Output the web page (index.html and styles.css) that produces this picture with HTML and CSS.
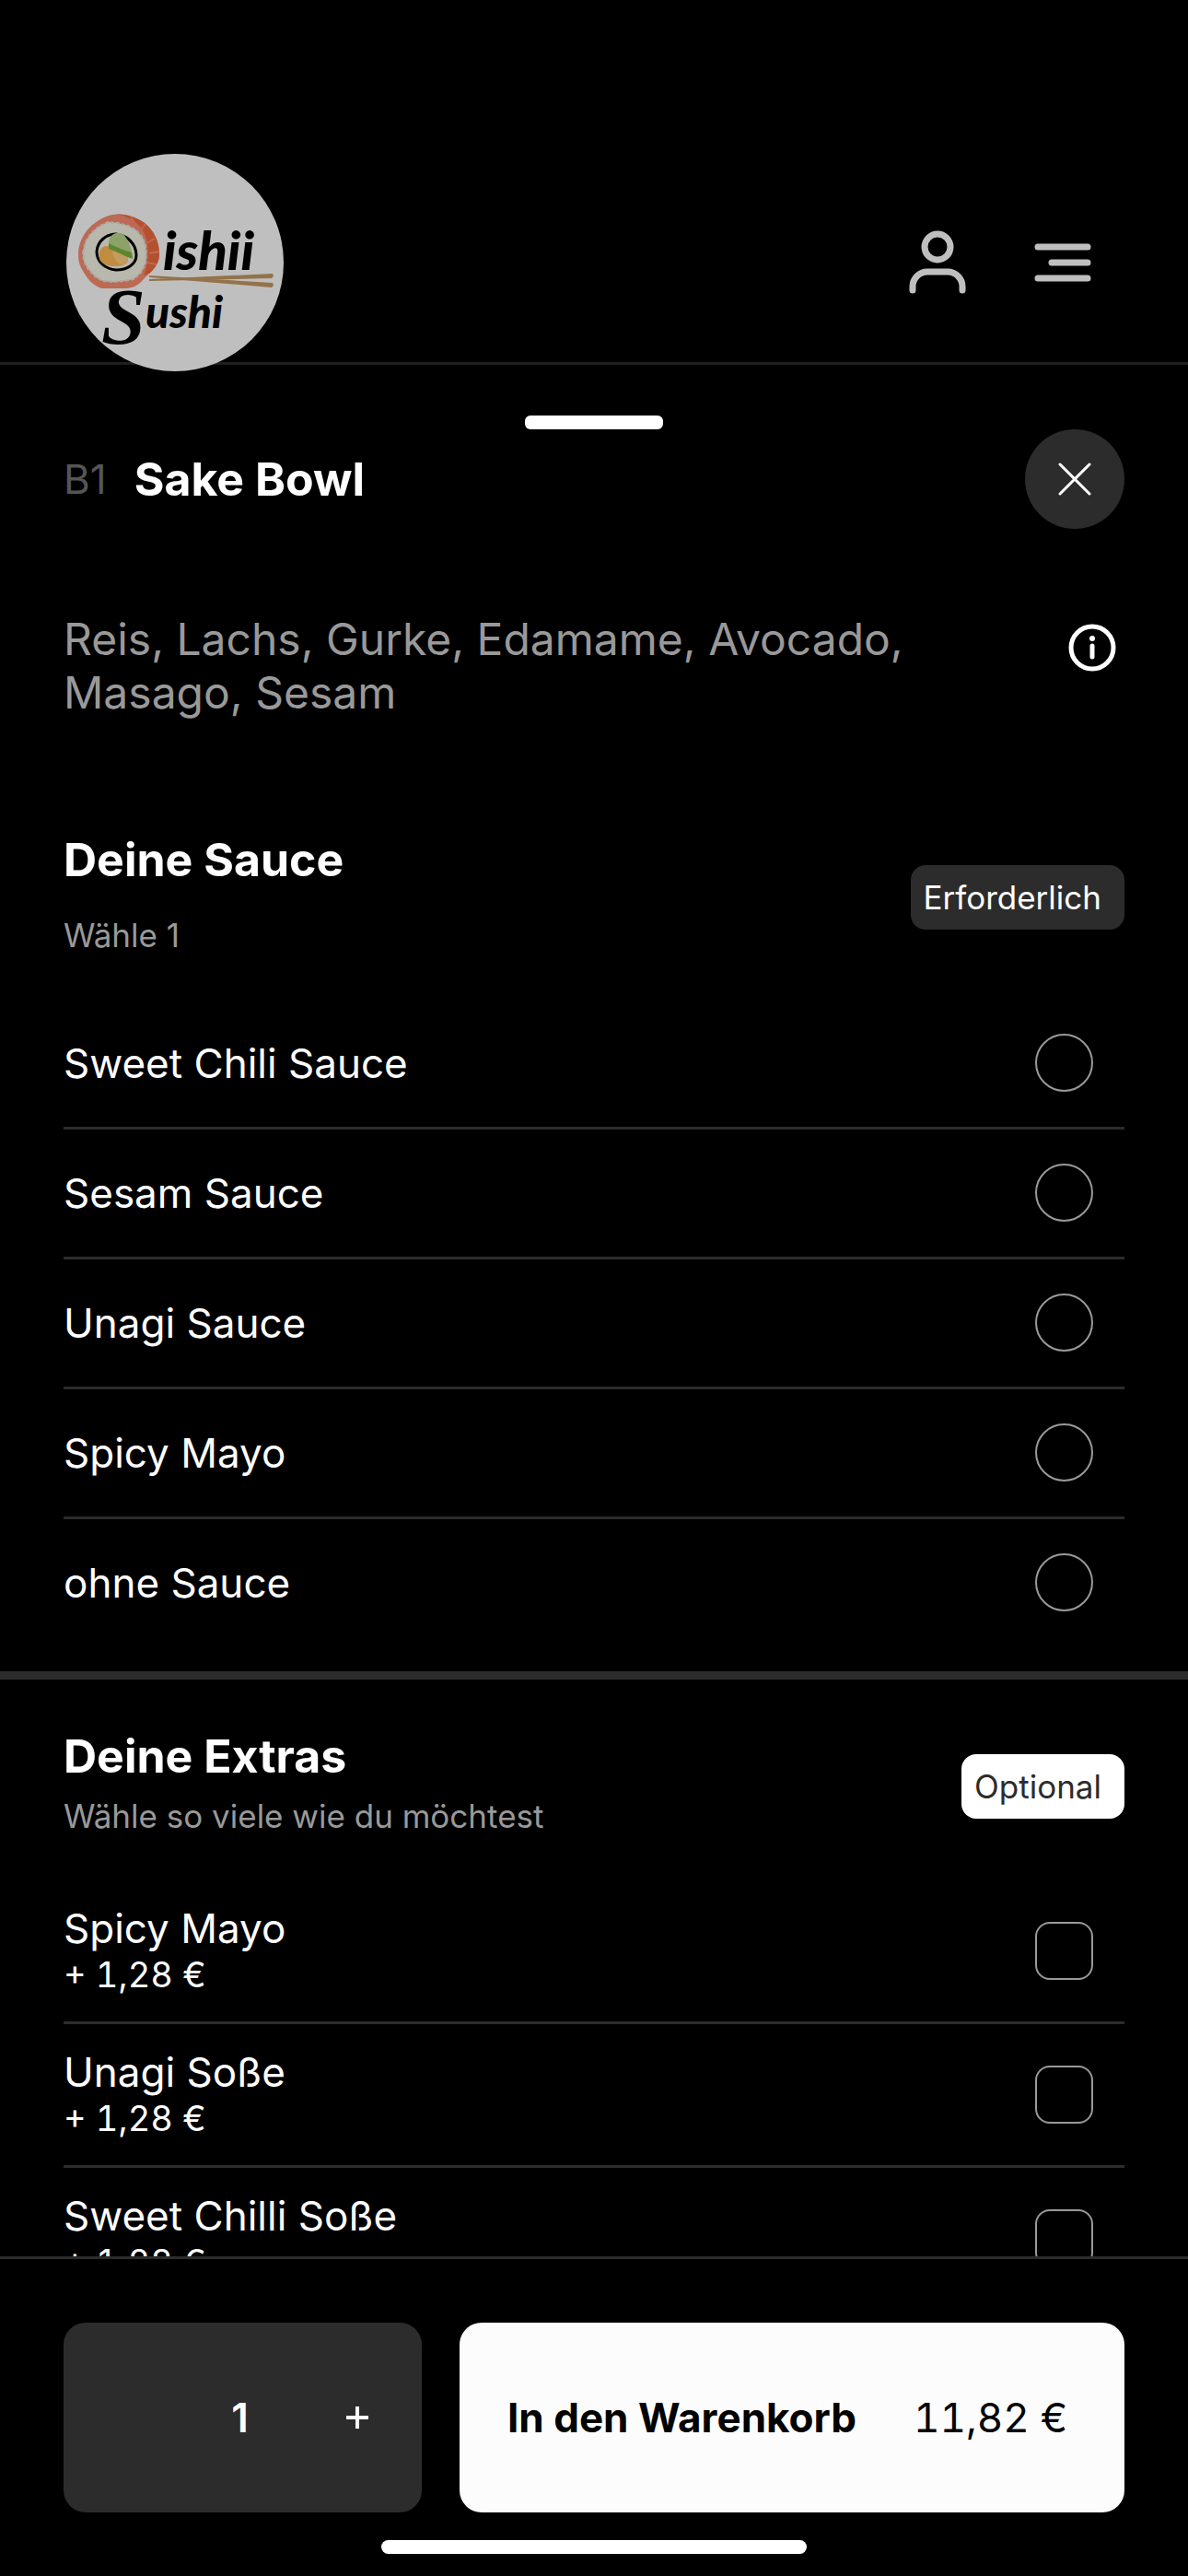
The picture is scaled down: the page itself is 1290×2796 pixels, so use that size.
FILE: index.html
```html
<!DOCTYPE html>
<html lang="de">
<head>
    <meta charset="UTF-8">
    <meta name="viewport" content="width=device-width, initial-scale=1.0">
    <title>Oishii Sushi - Sake Bowl</title>
    <link rel="stylesheet" href="styles.css">
</head>
<body>
    <header class="topbar">
        <a class="logo" href="#" aria-label="Oishii Sushi">
            <svg viewBox="0 0 236 236">
                <defs>
                    <clipPath id="rollClip">
                        <path d="M13 108C13 92 25 76 41 69C55 62 72 66 85 75C95 83 101 95 101 109C101 117 97 124 90 130C82 137 78 146 64 146H38C27 142 22 134 18 127C14 121 13 115 13 108Z"/>
                    </clipPath>
                </defs>
                <circle cx="118" cy="118" r="118" fill="#bfbfc0"/>
                <!-- salmon roll -->
                <g clip-path="url(#rollClip)">
                    <rect x="10" y="60" width="95" height="90" fill="#bd6a55"/>
                    <path d="M46 64C72 66 87 80 88 100C89 114 88 122 84 132L105 125V60Z" fill="#b5502f"/>
                    <path d="M56 66l8 6M70 68l5 9M86 76l-6 8M96 92l-9 5M101 106l-11 2M98 120l-10-2" stroke="#bd6a55" stroke-width="2"/>
                </g>
                <path d="M18 107L21 95L27 86L35 79L45 74L56 75L67 78L76 83L83 91L86 99L87 109L86 119L81 129L73 136L62 138L51 139L40 138L31 133L23 124L19 116Z" fill="#b9b8ad" stroke="#aaa9a5" stroke-width="2" stroke-dasharray="4 2"/>
                <path d="M33 106C34 94 44 87 54 87C66 88 76 98 76 110C76 120 66 126 54 126C42 125 33 117 33 106Z" fill="#b9b8ad" stroke="#000" stroke-width="3"/>
                <path d="M36 114C34 106 38 100 44 100C54 101 68 112 67 116C65 121 59 122 50 122C42 121 37 118 36 114Z" fill="#c08c40"/>
                <path d="M50 105L67 112C67 117 64 121 58 120C53 116 50 111 50 105Z" fill="#c39c62"/>
                <path d="M46 97C46 89 52 85 59 86C66 88 71 102 72 113C62 110 53 104 46 102Z" fill="#8ba369"/>
                <path d="M46 97C54 101 63 105 71 107L72 114C61 110 53 105 46 103Z" fill="#5d862e"/>
                <!-- chopsticks -->
                <path d="M90 136L90 138L223 135Q226 133 224 130Z" fill="#94724a"/>
                <path d="M90 132L90 134L223 145Q226 143 224 140Z" fill="#94724a"/>
                <text class="logo-text" x="105" y="126" font-size="58">ishii</text>
                <text class="logo-text logo-initial" x="38" y="206" font-size="86">S</text>
                <text class="logo-text" x="86" y="189" font-size="48">ushi</text>
            </svg>
        </a>
        <nav class="topbar-actions">
            <button class="icon-button" type="button" aria-label="Konto">
                <svg viewBox="0 0 72 72" fill="none" stroke="#bfbfbf" stroke-width="7" stroke-linecap="round">
                    <circle cx="36" cy="19" r="14"/>
                    <path d="M9 66V62A16 16 0 0 1 25 46H47A16 16 0 0 1 63 62V66"/>
                </svg>
            </button>
            <button class="icon-button" type="button" aria-label="Menü">
                <svg viewBox="0 0 72 72" fill="none" stroke="#bfbfbf" stroke-width="7" stroke-linecap="round">
                    <path d="M9 19H63M24 36H63M9 53H63"/>
                </svg>
            </button>
        </nav>
    </header>

    <main class="sheet">
        <div class="handle"></div>

        <div class="product">
            <span class="product-number">B1</span>
            <h1>Sake Bowl</h1>
            <button class="close" type="button" aria-label="Schließen">
                <svg viewBox="0 0 36 36" fill="none" stroke="#fff" stroke-width="3" stroke-linecap="round">
                    <path d="M2 2L34 34M34 2L2 34"/>
                </svg>
            </button>
        </div>

        <div class="description">
            <p>Reis, Lachs, Gurke, Edamame, Avocado, Masago, Sesam</p>
            <button class="info" type="button" aria-label="Informationen">
                <svg viewBox="0 0 52 52" fill="none" stroke="#fff" stroke-width="5" stroke-linecap="round">
                    <circle cx="26" cy="26" r="23"/>
                    <path d="M26 24V36"/>
                    <circle cx="26" cy="16" r="3" fill="#fff" stroke="none"/>
                </svg>
            </button>
        </div>

        <section class="group">
            <div class="group-header">
                <div class="group-titles spaced">
                    <h2>Deine Sauce</h2>
                    <p>Wähle 1</p>
                </div>
                <span class="tag">Erforderlich</span>
            </div>
            <div class="options">
                <label class="option"><span>Sweet Chili Sauce</span><input type="radio" name="sauce"></label>
                <label class="option"><span>Sesam Sauce</span><input type="radio" name="sauce"></label>
                <label class="option"><span>Unagi Sauce</span><input type="radio" name="sauce"></label>
                <label class="option"><span>Spicy Mayo</span><input type="radio" name="sauce"></label>
                <label class="option"><span>ohne Sauce</span><input type="radio" name="sauce"></label>
            </div>
        </section>

        <section class="group extras">
            <div class="group-header">
                <div class="group-titles">
                    <h2>Deine Extras</h2>
                    <p>Wähle so viele wie du möchtest</p>
                </div>
                <span class="tag tag-light">Optional</span>
            </div>
            <div class="options">
                <label class="option with-price">
                    <span>Spicy Mayo<small>+ 1,28 €</small></span>
                    <input type="checkbox" name="extra">
                </label>
                <label class="option with-price">
                    <span>Unagi Soße<small>+ 1,28 €</small></span>
                    <input type="checkbox" name="extra">
                </label>
                <label class="option with-price">
                    <span>Sweet Chilli Soße<small>+ 1,28 €</small></span>
                    <input type="checkbox" name="extra">
                </label>
            </div>
        </section>
    </main>

    <footer class="order-bar">
        <div class="quantity">
            <output>1</output>
            <button type="button" aria-label="Mehr">
                <svg viewBox="0 0 24 24" fill="none" stroke="#fff" stroke-width="4">
                    <path d="M12 0V24M0 12H24"/>
                </svg>
            </button>
        </div>
        <button class="add-to-cart" type="button">
            <strong>In den Warenkorb</strong>
            <span class="total">11,82 €</span>
        </button>
        <div class="home-indicator"></div>
    </footer>
</body>
</html>
```
FILE: styles.css
```css
* {
    box-sizing: border-box;
}
body {
    display: flex;
    flex-direction: column;
    height: 100vh;
    margin: 0;
    background-color: #000;
    color: #fff;
    font-family: Inter, "Liberation Sans", sans-serif;
    font-size: 44px;
}
h1, h2, p {
    margin: 0;
}
h1, h2 {
    font-size: 50px;
    font-weight: 700;
    line-height: 60px;
}
button {
    padding: 0;
    border: none;
    background: none;
    color: inherit;
    font: inherit;
    cursor: pointer;
}
svg {
    display: block;
    width: 100%;
}

/* Top bar */
.topbar {
    display: flex;
    flex-shrink: 0;
    justify-content: space-between;
    align-items: center;
    padding: 167px 100px 0 72px;
    border-bottom: 3px solid #202020;
}
.logo {
    width: 236px;
    margin-bottom: -10px;
    z-index: 1;
}
.logo-text {
    font-family: Lato, sans-serif;
    font-style: italic;
    font-weight: 900;
}
.logo-initial {
    font-family: "Liberation Serif", serif;
}
.topbar-actions {
    display: flex;
    gap: 64px;
    margin-top: 10px;
}
.icon-button {
    width: 72px;
}

/* Bottom sheet */
.sheet {
    flex: 1;
    min-height: 0;
    overflow: hidden;
    padding-top: 55px;
}
.handle {
    width: 150px;
    height: 15px;
    margin: 0 auto;
    border-radius: 6px;
    background-color: #fff;
}
.product {
    display: flex;
    align-items: center;
    padding: 0 69px;
}
.product-number {
    margin-right: 30px;
    color: #555;
}
.close {
    display: flex;
    justify-content: center;
    align-items: center;
    width: 108px;
    height: 108px;
    margin-left: auto;
    border-radius: 50%;
    background-color: #2c2c2c;
}
.close svg {
    width: 36px;
}
.description {
    display: flex;
    justify-content: space-between;
    padding: 91px 78px 122px 69px;
    color: #999;
    font-size: 48px;
    line-height: 58px;
}
.description p {
    max-width: 960px;
}
.info {
    width: 52px;
    height: 52px;
    margin-top: 12px;
}

/* Option groups */
.group {
    padding-bottom: 27px;
}
.extras {
    padding-top: 53px;
    border-top: 9px solid #2c2c2c;
}
.group-header {
    display: flex;
    justify-content: space-between;
    align-items: center;
    padding: 0 69px 40px;
}
.group-titles {
    display: flex;
    flex-direction: column;
    gap: 5px;
}
.group-titles.spaced {
    gap: 22px;
}
.group-titles p {
    color: #999;
    font-size: 35px;
    line-height: 60px;
}
.tag {
    padding: 0 25px 0 14px;
    border-radius: 16px;
    background-color: #2c2c2c;
    font-size: 35px;
    line-height: 70px;
}
.tag-light {
    background-color: #fff;
    color: #2c2c2c;
}
.options {
    padding: 0 69px;
}
.option {
    display: flex;
    justify-content: space-between;
    align-items: center;
    padding: 37px 34px 38px 0;
    border-bottom: 3px solid #2c2c2c;
}
.option:last-child {
    border-bottom: none;
}
.option.with-price {
    padding-top: 26px;
    padding-bottom: 27px;
    line-height: 52px;
}
.option small {
    display: block;
    font-size: 38px;
    font-variant-numeric: tabular-nums;
    line-height: 48px;
}
.option input {
    appearance: none;
    width: 63px;
    height: 63px;
    margin: 0;
    border: 2px solid #999;
    border-radius: 16px;
}
.option input[type="radio"] {
    border-radius: 50%;
}
.option input:checked {
    background-color: #fff;
}

/* Order bar */
.order-bar {
    position: relative;
    display: grid;
    flex-shrink: 0;
    grid-template-columns: 389fr 722fr;
    gap: 41px;
    padding: 69px;
    border-top: 3px solid #2c2c2c;
}
.quantity {
    display: grid;
    grid-template-columns: 1fr 1fr 1fr;
    align-items: center;
    justify-items: center;
    height: 206px;
    padding-right: 6px;
    border-radius: 24px;
    background-color: #2c2c2c;
    font-weight: 600;
}
.quantity output {
    grid-column: 2;
}
.quantity button {
    width: 24px;
}
.add-to-cart {
    display: flex;
    justify-content: space-between;
    align-items: center;
    padding: 0 62px 0 52px;
    border-radius: 24px;
    background-color: #fcfcfc;
    color: #000;
}
.add-to-cart strong {
    font-weight: 700;
}
.total {
    font-variant-numeric: tabular-nums;
}
.home-indicator {
    position: absolute;
    bottom: 24px;
    left: 50%;
    width: 462px;
    height: 15px;
    border-radius: 8px;
    background-color: #fff;
    transform: translateX(-50%);
}
```
